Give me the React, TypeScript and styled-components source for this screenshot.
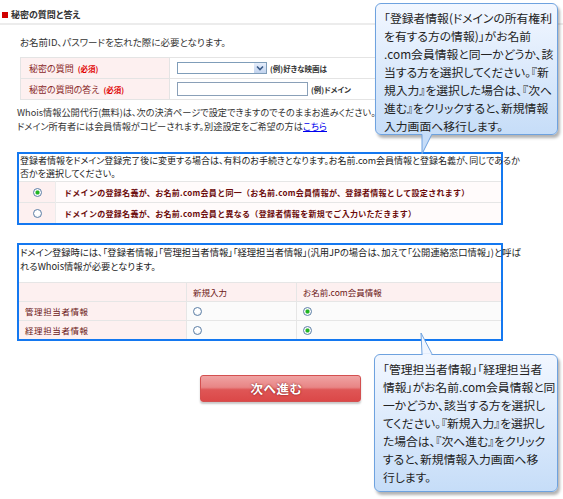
import React from "react";
import styled, { createGlobalStyle } from "styled-components";

const GlobalStyle = createGlobalStyle`
  html, body { margin: 0; padding: 0; background: #fff; }
  body { font-family: "Noto Sans CJK JP", "Noto Sans", sans-serif; color: #333; }
`;

const Page = styled.div`
  position: relative;
  width: 563px;
  height: 499px;
  overflow: hidden;
  font-family: "Noto Sans CJK JP", "Noto Sans", sans-serif;
  font-feature-settings: "palt";
  font-size: 9px;
  color: #333;
`;

const SectionHeader = styled.div`
  height: 25px;
  box-sizing: border-box;
  padding: 6px 0 0 2px;
  display: flex;
  align-items: center;
  gap: 3px;
  border-bottom: 2px solid #ececec;
  font-size: 9px;
  font-weight: bold;
  color: #333;
`;

const RedMark = styled.span`
  width: 6px;
  height: 6px;
  background: #d00000;
`;

const Intro = styled.p`
  margin: 10px 0 0 20px;
  font-size: 9.5px;
  line-height: 14px;
`;

const FormTable = styled.table`
  margin: 8px 0 0 20px;
  width: 520px;
  border-collapse: collapse;
  td {
    border: 1px solid #e4e4e4;
    padding: 0;
    height: 20px;
  }
`;

const LabelCell = styled.td`
  width: 140px;
  background: #fdf0f0;
  padding-left: 8px !important;
  font-size: 9px;
  color: #8b2a2a;
  white-space: nowrap;
`;

const Required = styled.span`
  color: #e00000;
  font-size: 7.5px;
  font-weight: bold;
  margin-left: 4px;
`;

const InputCell = styled.td`
  padding-left: 7px !important;
`;

const InputRow = styled.div`
  display: flex;
  align-items: center;
  gap: 3px;
`;

const SelectBox = styled.div`
  width: 90px;
  height: 12px;
  box-sizing: border-box;
  border: 1px solid #7f9db9;
  background: #fff;
  display: flex;
  justify-content: flex-end;
`;

const DropButton = styled.span`
  width: 12px;
  height: 100%;
  background: linear-gradient(#e6eefb, #c1d3ee);
  display: flex;
  align-items: center;
  justify-content: center;
`;

const Example = styled.span`
  font-size: 7.5px;
  font-weight: bold;
  color: #333;
  white-space: nowrap;
`;

const TextInput = styled.input`
  width: 131px;
  height: 14px;
  box-sizing: border-box;
  border: 1px solid #8aa0b8;
  padding: 0;
  margin: 0;
  background: #fff;
`;

const Whois = styled.p`
  margin: 5px 0 0 17px;
  font-size: 9.2px;
  line-height: 14px;
  white-space: nowrap;
`;

const Link = styled.a`
  color: #0000ee;
  text-decoration: underline;
`;

const InfoBox = styled.div<{ $gap: number }>`
  margin: ${(p) => p.$gap}px 0 0 17px;
  width: 486px;
  box-sizing: border-box;
  border: 2px solid #1478f0;
`;

const InfoText = styled.div<{ $lh: number; $fs: number }>`
  font-size: ${(p) => p.$fs}px;
  line-height: ${(p) => p.$lh}px;
  padding: 0 0 0 1px;
  white-space: nowrap;
  color: #222;
`;

const ChoiceTable = styled.table`
  width: 100%;
  margin-top: 1px;
  border-collapse: collapse;
  td {
    border-top: 1px solid #e6e6e6;
    height: 20px;
    padding: 0;
  }
`;

const RadioCell = styled.td`
  width: 36px;
  background: #fdf0f0;
  text-align: center;
  border-right: 1px solid #ececec;
  font-size: 0;
  line-height: 0;
`;

const ChoiceText = styled.td`
  font-size: 8px;
  font-weight: bold;
  color: #6b0a0a;
  padding-left: 8px !important;
  letter-spacing: 0.3px;
  background: #fffbfb;
  white-space: nowrap;
  font-feature-settings: normal;
`;

const MatrixTable = styled.table`
  width: 100%;
  margin-top: 9px;
  border-collapse: collapse;
  td {
    border: 1px solid #e6e6e6;
    height: 18px;
    padding: 0 0 0 6px;
    font-size: 8.5px;
    line-height: 10px;
    color: #6b1515;
    white-space: nowrap;
  }
  td:first-child { border-left: none; }
  td:last-child { border-right: none; }
  tr:last-child td { border-bottom: none; }
`;

const HeadCell = styled.td`
  background: #fdf0f0;
`;

const RowLabel = styled.td`
  background: #fdf0f0;
  width: 161px;
  letter-spacing: 0.6px;
`;

const PlainCell = styled.td<{ $w?: number }>`
  background: #fbfbfb;
  font-size: 0 !important;
  ${(p) => (p.$w ? `width: ${p.$w}px;` : "")}
`;

const Radio = styled.span<{ $checked?: boolean }>`
  display: inline-block;
  width: 9px;
  height: 9px;
  box-sizing: border-box;
  border-radius: 50%;
  border: 1px solid #5d7fa6;
  vertical-align: middle;
  background: ${(p) =>
    p.$checked
      ? "radial-gradient(circle, #22b522 0 1.4px, #9ddc9d 2.1px, #ffffff 2.8px, #e3e7ee 100%)"
      : "radial-gradient(circle at 45% 40%, #ffffff 0 40%, #dbe1e9 100%)"};
`;

const ButtonRow = styled.div`
  margin: 34px 0 0 200px;
  font-size: 0;
`;

const NextButton = styled.button`
  width: 161px;
  height: 27px;
  border: 1px solid #d35050;
  border-radius: 3px;
  padding: 0 8px 0 0;
  background: linear-gradient(#f0a3a3 0%, #e88585 45%, #df5656 55%, #db4848 100%);
  box-shadow: 0 2px 2px rgba(0, 0, 0, 0.22);
  color: #fff;
  font-family: "Noto Sans CJK JP", sans-serif;
  font-size: 12.5px;
  font-weight: bold;
  text-shadow: 0 0 2px rgba(110, 0, 0, 0.9);
  letter-spacing: 0.5px;
`;

const Tooltip = styled.div<{ $left: number; $top: number; $w: number; $h: number }>`
  position: absolute;
  left: ${(p) => p.$left}px;
  top: ${(p) => p.$top}px;
  width: ${(p) => p.$w}px;
  height: ${(p) => p.$h}px;
  box-sizing: border-box;
  padding: 5px 0 0 8px;
  border: 1px solid #6ea2df;
  border-radius: 6px;
  background: linear-gradient(#f2f7ff, #c6ddf8);
  box-shadow: 2px 3px 3px rgba(0, 0, 0, 0.3);
  font-size: 11.8px;
  line-height: 18px;
  color: #222;
  white-space: nowrap;
  font-feature-settings: "palt";
`;

const Tail = styled.svg<{ $left: number; $top: number }>`
  position: absolute;
  left: ${(p) => p.$left}px;
  top: ${(p) => p.$top}px;
  overflow: visible;
`;

const Chevron = () => (
  <svg width="8" height="6" viewBox="0 0 8 6">
    <path d="M1 1.5 L4 4.5 L7 1.5" fill="none" stroke="#3a5a88" strokeWidth="1.6" />
  </svg>
);

export default function App() {
  return (
    <Page>
      <GlobalStyle />
      <SectionHeader>
        <RedMark />
        秘密の質問と答え
      </SectionHeader>
      <Intro>お名前ID、パスワードを忘れた際に必要となります。</Intro>
      <FormTable>
        <tbody>
          <tr>
            <LabelCell>
              秘密の質問<Required>(必須)</Required>
            </LabelCell>
            <InputCell>
              <InputRow>
                <SelectBox>
                  <DropButton>
                    <Chevron />
                  </DropButton>
                </SelectBox>
                <Example>(例)好きな映画は</Example>
              </InputRow>
            </InputCell>
          </tr>
          <tr>
            <LabelCell>
              秘密の質問の答え<Required>(必須)</Required>
            </LabelCell>
            <InputCell>
              <InputRow>
                <TextInput type="text" />
                <Example>(例)ドメイン</Example>
              </InputRow>
            </InputCell>
          </tr>
        </tbody>
      </FormTable>
      <Whois>
        Whois情報公開代行(無料)は、次の決済ページで設定できますのでそのままお進みください。
        <br />
        ドメイン所有者には会員情報がコピーされます。別途設定をご希望の方は<Link href="#">こちら</Link>
      </Whois>

      <InfoBox $gap={19}>
        <InfoText $lh={13} $fs={9}>
          登録者情報をドメイン登録完了後に変更する場合は、有料のお手続きとなります。お名前.com会員情報と登録名義が、同じであるか
          <br />
          否かを選択してください。
        </InfoText>
        <ChoiceTable>
          <tbody>
            <tr>
              <RadioCell>
                <Radio $checked />
              </RadioCell>
              <ChoiceText>
                ドメインの登録名義が、お名前.com会員と同一（お名前.com会員情報が、登録者情報として設定されます）
              </ChoiceText>
            </tr>
            <tr>
              <RadioCell>
                <Radio />
              </RadioCell>
              <ChoiceText>ドメインの登録名義が、お名前.com会員と異なる（登録者情報を新規でご入力いただきます）</ChoiceText>
            </tr>
          </tbody>
        </ChoiceTable>
      </InfoBox>

      <InfoBox $gap={18}>
        <InfoText $lh={14} $fs={9.3}>
          ドメイン登録時には、「登録者情報」「管理担当者情報」「経理担当者情報」(汎用JPの場合は、加えて「公開連絡窓口情報」)と呼ば
          <br />
          れるWhois情報が必要となります。
        </InfoText>
        <MatrixTable>
          <tbody>
            <tr>
              <HeadCell />
              <HeadCell>新規入力</HeadCell>
              <HeadCell>お名前.com会員情報</HeadCell>
            </tr>
            <tr>
              <RowLabel>管理担当者情報</RowLabel>
              <PlainCell $w={103}>
                <Radio />
              </PlainCell>
              <PlainCell>
                <Radio $checked />
              </PlainCell>
            </tr>
            <tr>
              <RowLabel>経理担当者情報</RowLabel>
              <PlainCell $w={103}>
                <Radio />
              </PlainCell>
              <PlainCell>
                <Radio $checked />
              </PlainCell>
            </tr>
          </tbody>
        </MatrixTable>
      </InfoBox>

      <ButtonRow>
        <NextButton type="button">次へ進む</NextButton>
      </ButtonRow>

      <Tooltip $left={375} $top={3} $w={183} $h={132}>
        「登録者情報(ドメインの所有権利
        <br />
        を有する方の情報)」がお名前
        <br />
        .com会員情報と同一かどうか、該
        <br />
        当する方を選択してください。『新
        <br />
        規入力』を選択した場合は、『次へ
        <br />
        進む』をクリックすると、新規情報
        <br />
        入力画面へ移行します。
      </Tooltip>
      <Tail $left={421} $top={134} width="12" height="21" viewBox="0 0 12 21">
        <path d="M1 0 L1 20 L11 0" fill="#c7ddf8" stroke="#6ea2df" strokeWidth="1" />
        <rect x="1.6" y="-0.5" width="8.5" height="1.6" fill="#c7ddf8" />
      </Tail>

      <Tooltip $left={374} $top={354} $w={184} $h={138}>
        「管理担当者情報」「経理担当者
        <br />
        情報」がお名前.com会員情報と同
        <br />
        一かどうか、該当する方を選択し
        <br />
        てください。『新規入力』を選択し
        <br />
        た場合は、『次へ進む』をクリック
        <br />
        すると、新規情報入力画面へ移
        <br />
        行します。
      </Tooltip>
      <Tail $left={420} $top={333} width="13" height="22" viewBox="0 0 13 22">
        <path d="M1 0 L2 21 L12 21 Z" fill="#f1f6ff" stroke="#6ea2df" strokeWidth="1" />
        <rect x="2.6" y="20.2" width="8.8" height="2" fill="#f1f6ff" />
      </Tail>
    </Page>
  );
}
